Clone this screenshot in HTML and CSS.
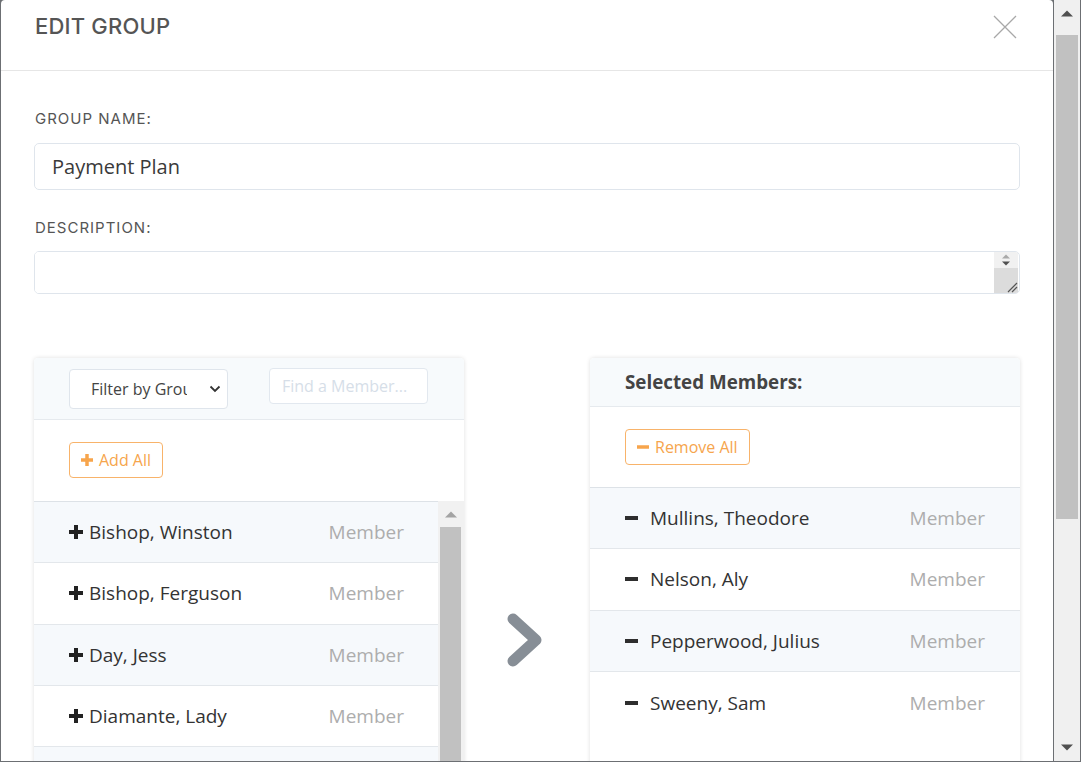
FILE: index.html
```html
<!DOCTYPE html>
<html lang="en">
<head>
<meta charset="utf-8">
<title>Edit Group</title>
<link rel="stylesheet" href="styles.css">
</head>
<body>
<div class="modal">
  <div class="modal-header">
    <h2 class="modal-title">EDIT GROUP</h2>
    <button class="close-btn" aria-label="Close">
      <svg width="24" height="24" viewBox="0 0 24 24"><path d="M1 1 L23 23 M23 1 L1 23" stroke="#a8a8a8" stroke-width="1.3" fill="none"/></svg>
    </button>
  </div>
  <div class="modal-body">
    <label class="field-label first">GROUP NAME:</label>
    <input class="text-input" type="text" value="Payment Plan">
    <label class="field-label">DESCRIPTION:</label>
    <div class="textarea-box">
      <textarea class="textarea"></textarea>
      <div class="ta-scroll">
        <div class="ta-spin">
          <svg width="10" height="12" viewBox="0 0 10 12"><path d="M1 4.5 L5 0.5 L9 4.5 Z" fill="#a9a9a9"/><path d="M1 7.5 L9 7.5 L5 11.5 Z" fill="#505050"/></svg>
        </div>
        <div class="ta-grip">
          <svg width="12" height="12" viewBox="0 0 12 12"><path d="M2 11 L11 2 M6 11 L11 6" stroke="#555" stroke-width="1.2" fill="none"/></svg>
        </div>
      </div>
    </div>

    <div class="transfer">
      <section class="panel">
        <div class="panel-head filters">
          <div class="select">
            <span class="select-text">Filter by Grou</span>
            <svg class="select-caret" width="12" height="8" viewBox="0 0 12 8"><path d="M1.5 1.5 L6 6 L10.5 1.5" stroke="#333" stroke-width="1.8" fill="none"/></svg>
          </div>
          <input class="search" type="text" placeholder="Find a Member...">
        </div>
        <div class="panel-actions">
          <button class="btn-outline"><svg width="12" height="12" viewBox="0 0 12 12"><path d="M4.25 0h3.5v12h-3.5z M0 4.25h12v3.5H0z" fill="#f7a54c"/></svg>Add All</button>
        </div>
        <div class="list-wrap">
          <ul class="rows">
            <li class="row"><span class="name"><svg class="ico-plus" width="14" height="14" viewBox="0 0 14 14"><path d="M5 0h4v14H5z M0 5h14v4H0z" fill="#222"/></svg>Bishop, Winston</span><span class="role">Member</span></li>
            <li class="row"><span class="name"><svg class="ico-plus" width="14" height="14" viewBox="0 0 14 14"><path d="M5 0h4v14H5z M0 5h14v4H0z" fill="#222"/></svg>Bishop, Ferguson</span><span class="role">Member</span></li>
            <li class="row"><span class="name"><svg class="ico-plus" width="14" height="14" viewBox="0 0 14 14"><path d="M5 0h4v14H5z M0 5h14v4H0z" fill="#222"/></svg>Day, Jess</span><span class="role">Member</span></li>
            <li class="row"><span class="name"><svg class="ico-plus" width="14" height="14" viewBox="0 0 14 14"><path d="M5 0h4v14H5z M0 5h14v4H0z" fill="#222"/></svg>Diamante, Lady</span><span class="role">Member</span></li>
            <li class="row"></li>
          </ul>
          <div class="vscroll">
            <svg class="vscroll-up" width="12" height="7" viewBox="0 0 12 7"><path d="M0 6.5 L6 0.5 L12 6.5 Z" fill="#a3a3a3"/></svg>
            <div class="vscroll-thumb"></div>
          </div>
        </div>
      </section>

      <div class="move">
        <svg width="40" height="58" viewBox="0 0 40 58"><path d="M8 8 L31 29 L8 50" stroke="#878e96" stroke-width="11" fill="none" stroke-linecap="round" stroke-linejoin="round"/></svg>
      </div>

      <section class="panel">
        <div class="panel-head selected">
          <h3 class="panel-title">Selected Members:</h3>
        </div>
        <div class="panel-actions tight">
          <button class="btn-outline"><svg width="12" height="12" viewBox="0 0 12 12"><path d="M0 4.25h12v3.5H0z" fill="#f7a54c"/></svg>Remove All</button>
        </div>
        <ul class="rows full">
          <li class="row"><span class="name"><svg class="ico-minus" width="13" height="14" viewBox="0 0 13 14"><path d="M0 5h13v4H0z" fill="#2e2e2e"/></svg>Mullins, Theodore</span><span class="role">Member</span></li>
          <li class="row"><span class="name"><svg class="ico-minus" width="13" height="14" viewBox="0 0 13 14"><path d="M0 5h13v4H0z" fill="#2e2e2e"/></svg>Nelson, Aly</span><span class="role">Member</span></li>
          <li class="row"><span class="name"><svg class="ico-minus" width="13" height="14" viewBox="0 0 13 14"><path d="M0 5h13v4H0z" fill="#2e2e2e"/></svg>Pepperwood, Julius</span><span class="role">Member</span></li>
          <li class="row last"><span class="name"><svg class="ico-minus" width="13" height="14" viewBox="0 0 13 14"><path d="M0 5h13v4H0z" fill="#2e2e2e"/></svg>Sweeny, Sam</span><span class="role">Member</span></li>
        </ul>
      </section>
    </div>
  </div>
</div>
<div class="page-scroll">
  <svg class="ps-arrow" width="12" height="7" viewBox="0 0 12 7"><path d="M0 6.5 L6 0.5 L12 6.5 Z" fill="#505050"/></svg>
  <div class="ps-track"><div class="ps-thumb"></div></div>
  <svg class="ps-arrow" width="12" height="7" viewBox="0 0 12 7"><path d="M0 0.5 L12 0.5 L6 6.5 Z" fill="#505050"/></svg>
</div>
</body>
</html>
```

FILE: styles.css
```css
* { box-sizing: border-box; }
html, body { margin: 0; height: 762px; overflow: hidden; }
body {
  display: flex;
  align-items: stretch;
  background: #6c6f73;
  padding: 0 1px 1px 1px;
  font-family: "Open Sans", "Liberation Sans", sans-serif;
}
.modal {
  width: 1052px;
  flex: none;
  background: #fff;
  border-radius: 4px 4px 0 0;
  overflow: hidden;
  display: flex;
  flex-direction: column;
}
.modal-header {
  height: 71px;
  flex: none;
  border-bottom: 1px solid #e6e6e6;
  display: flex;
  justify-content: space-between;
  align-items: flex-start;
  padding: 13px 36px 0 34px;
}
.modal-title {
  margin: 0;
  font-family: "Inter", "Liberation Sans", sans-serif;
  font-weight: 500;
  font-size: 22px;
  line-height: 26px;
  letter-spacing: 0.2px;
  color: #555;
}
.close-btn {
  border: 0;
  background: none;
  padding: 0;
  margin-top: 2px;
  width: 24px;
  height: 24px;
  display: block;
}
.close-btn svg { display: block; }
.modal-body {
  padding: 0 33px;
  display: flex;
  flex-direction: column;
}
.field-label {
  display: block;
  font-family: "Inter", "Liberation Sans", sans-serif;
  font-size: 15px;
  line-height: 20px;
  letter-spacing: 1px;
  color: #555;
  margin: 28px 0 13px 1px;
}
.field-label.first { margin-top: 38px; margin-bottom: 14px; }
.text-input {
  height: 47px;
  width: 100%;
  border: 1px solid #dfe5ec;
  border-radius: 5px;
  padding: 0 17px;
  font-family: "Open Sans", "Liberation Sans", sans-serif;
  font-size: 20px;
  color: #3a3a3a;
  outline: none;
}
.textarea-box {
  height: 43px;
  border: 1px solid #dfe5ec;
  border-radius: 5px;
  display: flex;
  overflow: hidden;
}
.textarea {
  flex: 1;
  border: 0;
  resize: none;
  outline: none;
  font-family: "Open Sans", "Liberation Sans", sans-serif;
  font-size: 16px;
}
.ta-scroll {
  width: 24px;
  margin-right: 1px;
  display: flex;
  flex-direction: column;
}
.ta-spin {
  height: 16px;
  background: #f1f1f1;
  display: flex;
  justify-content: center;
  align-items: center;
}
.ta-grip {
  flex: 1;
  background: #dcdcdc;
  display: flex;
  justify-content: flex-end;
  align-items: flex-end;
}
.ta-grip svg { display: block; }

.transfer {
  margin-top: 64px;
  display: grid;
  grid-template-columns: 430px 1fr 430px;
  align-items: start;
}
.panel {
  height: 520px;
  background: #fff;
  border-radius: 4px;
  box-shadow: 0 0 4px rgba(0, 0, 0, 0.13);
  display: flex;
  flex-direction: column;
  overflow: hidden;
}
.panel-head {
  background: #f7fafc;
  border-bottom: 1px solid #e6eaee;
  flex: none;
}
.panel-head.filters {
  height: 62px;
  padding: 0 36px 0 35px;
  display: flex;
  justify-content: space-between;
  align-items: flex-start;
}
.select {
  margin-top: 11px;
  width: 159px;
  height: 40px;
  border: 1px solid #dfe5ec;
  border-radius: 4px;
  background: #fff;
  display: flex;
  align-items: center;
  padding-left: 21px;
}
.select-text {
  width: 96px;
  overflow: hidden;
  white-space: nowrap;
  font-size: 16px;
  color: #444;
}
.select-caret { margin-left: 22px; }
.search {
  margin-top: 10px;
  width: 159px;
  height: 36px;
  border: 1px solid #e2e8ef;
  border-radius: 4px;
  padding: 0 12px;
  font-family: "Open Sans", "Liberation Sans", sans-serif;
  font-size: 16px;
  outline: none;
}
.search::placeholder { color: #d6dee8; }
.panel-head.selected {
  height: 49px;
  padding: 0 35px;
  display: flex;
  align-items: center;
}
.panel-title {
  margin: 0;
  font-size: 18.8px;
  font-weight: 700;
  color: #444;
}
.panel-actions {
  flex: none;
  padding: 22px 35px 23px;
}
.panel-actions.tight { padding-bottom: 22px; }
.btn-outline {
  height: 36px;
  display: inline-flex;
  align-items: center;
  gap: 6px;
  padding: 0 11px 0 11px;
  border: 1px solid #f8b36a;
  border-radius: 4px;
  background: #fff;
  color: #f6a54d;
  font-family: "Open Sans", "Liberation Sans", sans-serif;
  font-size: 16px;
}
.btn-outline svg { display: block; }
.list-wrap {
  flex: 1;
  display: flex;
}
.rows {
  list-style: none;
  margin: 0;
  padding: 0;
  flex: 1;
  border-top: 1px solid #dde2e7;
}
.row {
  height: 61.3px;
  border-bottom: 1px solid #e3e7eb;
  display: flex;
  justify-content: space-between;
  align-items: center;
  padding: 0 34px 0 35px;
  font-size: 19px;
}
.row:nth-child(odd) { background: #f6f9fc; }
.row.last { border-bottom: 0; }
.rows.full .row { padding-right: 35px; }
.name {
  display: flex;
  align-items: center;
  color: #333;
}
.ico-plus { margin-right: 6px; }
.ico-minus { margin-right: 12px; }
.role { color: #adadad; }
.vscroll {
  width: 26px;
  background: #f1f1f1;
  display: flex;
  flex-direction: column;
  align-items: center;
  padding-top: 10px;
}
.vscroll-up { display: block; margin-right: 1px; }
.vscroll-thumb {
  margin-top: 9px;
  width: 21px;
  margin-right: 1px;
  flex: 1;
  background: #c1c1c1;
}
.move {
  display: flex;
  justify-content: center;
  padding-top: 253px;
  padding-right: 4px;
}
.move svg { display: block; }

.page-scroll {
  width: 26px;
  flex: none;
  margin-left: 1px;
  background: #f0f0f0;
  display: flex;
  flex-direction: column;
  align-items: center;
}
.ps-arrow { display: block; flex: none; margin: 10px 0; }
.ps-track {
  flex: 1;
  width: 100%;
  padding: 8px 2px 0 2px;
}
.ps-thumb {
  height: 484px;
  background: #c1c1c1;
}
```
